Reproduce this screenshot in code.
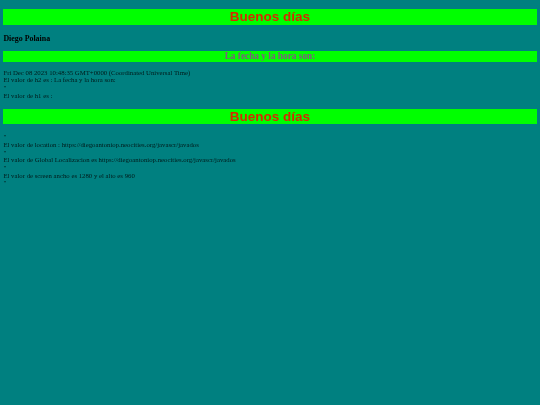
const serif = "font-['Liberation_Serif',serif]"

function Saludo() {
  return (
    <h1 className="bg-[#00ff00] text-center font-['Liberation_Sans',sans-serif] text-[13.5px] leading-[15.5px] font-bold text-[#d62a00]">
      Buenos días
    </h1>
  )
}

function Linea({ children }: { children: React.ReactNode }) {
  return <p className="text-[6.75px] leading-[7.65px] text-[#001a1a]">{children}</p>
}

export default function App() {
  return (
    <div className={`${serif} min-h-[405px] bg-[#008080] px-[3.4px] pt-[9px] text-black blur-[0.3px]`}>
      <Saludo />
      <h3 className="mt-[9px] text-[7.9px] leading-[9px] font-bold text-black">Diego Polaina</h3>
      <h2 className="mt-[8px] bg-[#00ff00] text-center text-[9.3px] leading-[11px] font-bold text-[#805a80]">
        La fecha y la hora son:
      </h2>
      <div className="mt-[7px]">
        <Linea>Fri Dec 08 2023 10:48:35 GMT+0000 (Coordinated Universal Time)</Linea>
        <Linea>El valor de h2 es : La fecha y la hora son:</Linea>
        <Linea>"</Linea>
        <div className="h-[0.4px]" />
        <Linea>El valor de h1 es :</Linea>
      </div>
      <div className="mt-[9.4px]">
        <Saludo />
      </div>
      <div className="mt-[9px]">
        <Linea>"</Linea>
        <Linea>El valor de location : https://diegoantoniop.neocities.org/javascr/javados</Linea>
        <Linea>"</Linea>
        <Linea>El valor de Global Localizacion es https://diegoantoniop.neocities.org/javascr/javados</Linea>
        <Linea>"</Linea>
        <Linea>El valor de screen ancho es 1280 y el alto es 960</Linea>
        <Linea>"</Linea>
      </div>
    </div>
  )
}
